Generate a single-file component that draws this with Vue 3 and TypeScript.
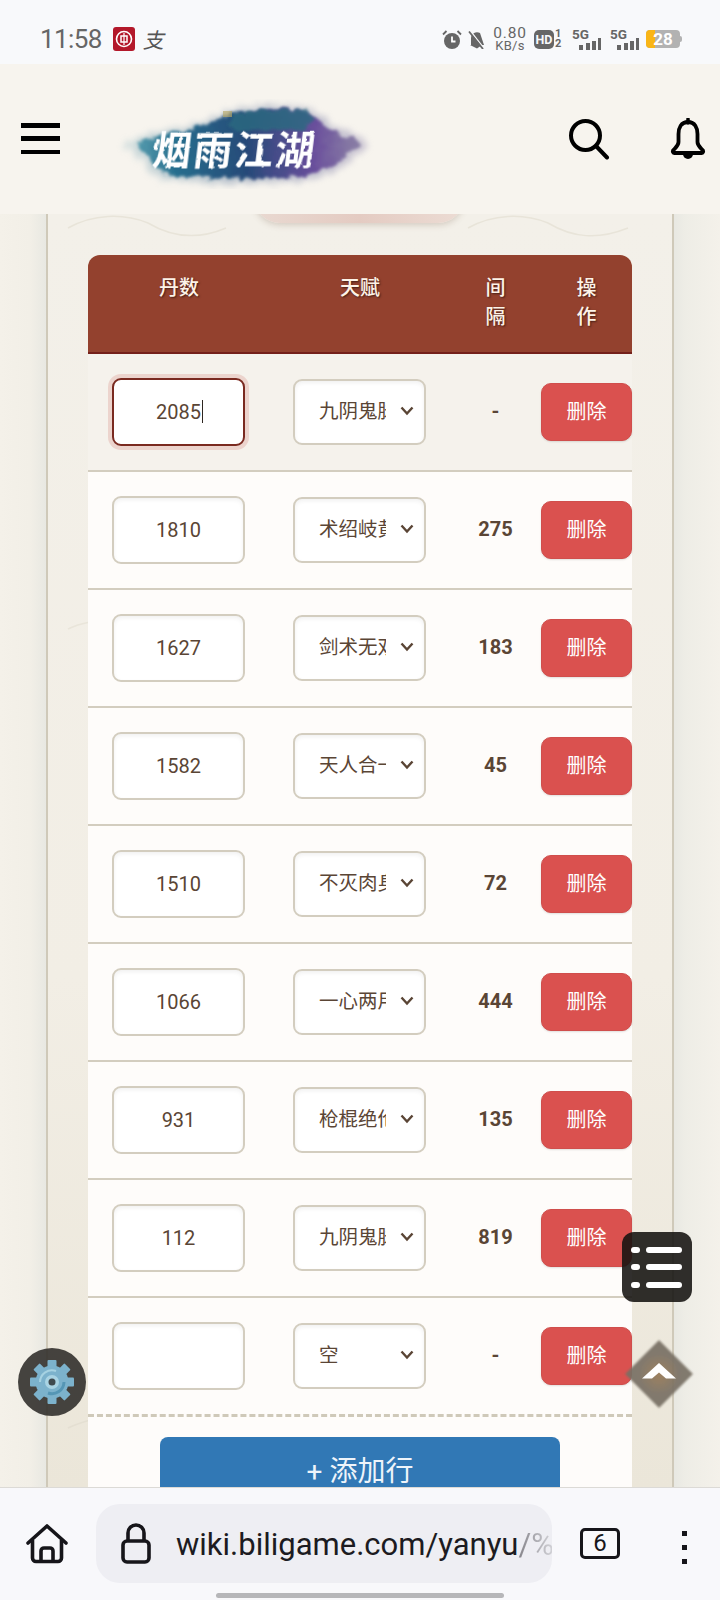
<script setup lang="ts">
interface Row { dan: string; talent: string; gap: string; focused?: boolean }

const rows: Row[] = [
  { dan: '2085', talent: '九阴鬼脉', gap: '-', focused: true },
  { dan: '1810', talent: '术绍岐黄', gap: '275' },
  { dan: '1627', talent: '剑术无双', gap: '183' },
  { dan: '1582', talent: '天人合一', gap: '45' },
  { dan: '1510', talent: '不灭肉身', gap: '72' },
  { dan: '1066', talent: '一心两用', gap: '444' },
  { dan: '931', talent: '枪棍绝伦', gap: '135' },
  { dan: '112', talent: '九阴鬼脉', gap: '819' },
  { dan: '', talent: '空', gap: '-' },
]

const talents = ['空', '九阴鬼脉', '术绍岐黄', '剑术无双', '天人合一', '不灭肉身', '一心两用', '枪棍绝伦']
const teeth = [0, 45, 90, 135, 180, 225, 270, 315]
</script>

<template>
  <div class="screen">
    <div class="status">
      <div class="status-left">
        <span class="time">11:58</span>
        <svg class="bank" width="22" height="24" viewBox="0 0 22 24">
          <rect width="22" height="24" rx="3" fill="#b3182a" />
          <circle cx="11" cy="12" r="7.500" fill="none" stroke="#fff" stroke-width="1.600" />
          <rect x="8" y="9" width="6" height="6" fill="none" stroke="#fff" stroke-width="1.500" />
          <path d="M11 6v12" stroke="#fff" stroke-width="1.200" />
        </svg>
        <span class="alipay">支</span>
      </div>
      <div class="status-right">
        <svg width="20" height="19" viewBox="0 0 20 19">
          <circle cx="10" cy="11" r="8" fill="#666" />
          <path d="M10 6.500V11.500H13.500" fill="none" stroke="#fff" stroke-width="1.800" />
          <path d="M1 4.500 4.500 1M19 4.500 15.500 1" stroke="#666" stroke-width="1.800" />
        </svg>
        <svg class="mute" width="18" height="19" viewBox="0 0 18 19">
          <path d="M3 15V8a6 6 0 0 1 9-5l4 12z M2 15h12l-5 3.500z" fill="#666" />
          <path d="M2 0.500 16 18.500" stroke="#f8f9fb" stroke-width="1.500" />
          <path d="M1 1.500 15 19" stroke="#666" stroke-width="1.800" />
        </svg>
        <div class="speed"><span class="speed-top">0.80</span><span class="speed-bottom">KB/s</span></div>
        <span class="hd">HD</span>
        <div class="sims"><span>1</span><span>2</span></div>
        <div class="net">
          <span class="net-label">5G</span>
          <svg width="24" height="12" viewBox="0 0 24 12"><path d="M2 7h4v5H2zM9 5h4v7H9zM15 3h4v9h-4zM21 0h3v12h-3z" fill="#666" /></svg>
        </div>
        <div class="net">
          <span class="net-label">5G</span>
          <svg width="24" height="12" viewBox="0 0 24 12"><path d="M2 7h4v5H2zM9 5h4v7H9zM15 3h4v9h-4zM21 0h3v12h-3z" fill="#666" /></svg>
        </div>
        <div class="battery"><span class="battery-level"></span><span class="battery-num">28</span></div>
      </div>
    </div>

    <header class="site-header">
      <div class="burger"><span></span><span></span><span></span></div>
      <svg class="logo" width="270" height="90" viewBox="0 0 270 90">
        <defs>
          <linearGradient id="ink" x1="0" x2="1" y1="0" y2="0">
            <stop offset="0" stop-color="#5a9fb0" />
            <stop offset="0.2" stop-color="#256d8d" />
            <stop offset="0.5" stop-color="#264a78" />
            <stop offset="0.8" stop-color="#6a4f9c" />
            <stop offset="1" stop-color="#8d84a6" />
          </linearGradient>
          <linearGradient id="halo" x1="0" x2="1" y1="0" y2="0">
            <stop offset="0" stop-color="#a9c6cc" />
            <stop offset="0.5" stop-color="#8d9cb4" />
            <stop offset="1" stop-color="#a79fbc" />
          </linearGradient>
          <filter id="rough" x="-10%" y="-20%" width="120%" height="140%">
            <feTurbulence type="fractalNoise" baseFrequency="0.1" numOctaves="4" seed="11" />
            <feDisplacementMap in="SourceGraphic" scale="13" xChannelSelector="R" yChannelSelector="G" />
            <feGaussianBlur stdDeviation="1.600" />
          </filter>
          <filter id="soft" x="-15%" y="-30%" width="130%" height="160%">
            <feTurbulence type="fractalNoise" baseFrequency="0.16" numOctaves="3" seed="4" />
            <feDisplacementMap in="SourceGraphic" scale="14" xChannelSelector="R" yChannelSelector="G" />
            <feGaussianBlur stdDeviation="3" />
          </filter>
          <filter id="brush" x="-5%" y="-10%" width="110%" height="120%">
            <feTurbulence type="fractalNoise" baseFrequency="0.14" numOctaves="2" seed="3" />
            <feDisplacementMap in="SourceGraphic" scale="2.500" xChannelSelector="R" yChannelSelector="G" />
          </filter>
        </defs>
        <path
          d="M14 45C36 34 66 30 88 24C110 14 130 7 160 6C192 5 210 12 222 26C238 32 254 38 258 46C250 58 234 62 228 72C200 80 190 84 160 84C120 84 70 86 46 78C36 66 26 56 14 45Z"
          fill="url(#halo)"
          opacity="0.55"
          filter="url(#soft)"
        />
        <path
          d="M22 45C44 37 70 33 92 27C112 18 130 11 160 10C188 9 204 14 216 29C230 34 246 39 250 46C242 54 230 58 222 68C200 76 188 80 160 79C122 80 74 80 52 74C44 62 34 53 22 45Z"
          fill="url(#ink)"
          filter="url(#rough)"
        />
        <path d="M118 24l6-9h12v-4h58l10 9-8 12h-70z" fill="#2b6a80" opacity="0.8" filter="url(#rough)" />
        <rect x="113" y="12" width="9" height="6" fill="#b9a968" opacity="0.65" />
        <g transform="translate(41 0) skewX(-7) translate(8 0)">
          <text class="logo-text" x="0" y="66" textLength="162" filter="url(#brush)">烟雨江湖</text>
        </g>
      </svg>
      <div class="header-spacer"></div>
      <svg class="search" width="42" height="42" viewBox="0 0 42 42">
        <circle cx="17.500" cy="17.500" r="14.500" fill="none" stroke="#000" stroke-width="4" />
        <path d="M28 28 39 39.500" stroke="#000" stroke-width="4" stroke-linecap="round" />
      </svg>
      <svg class="bell" width="36" height="42" viewBox="0 0 36 42">
        <path d="M18 4C11 4 8.500 10 8.500 16V24C8.500 28 5 30 3 32.500C2.500 33.500 3 35 4.500 35H31.500C33 35 33.500 33.500 33 32.500C31 30 27.500 28 27.500 24V16C27.500 10 25 4 18 4Z" fill="none" stroke="#000" stroke-width="3.800" stroke-linejoin="round" />
        <path d="M18 1v4" stroke="#000" stroke-width="3.500" stroke-linecap="round" />
        <path d="M13 36h10a5 5 0 0 1-10 0Z" fill="#000" />
      </svg>
    </header>

    <main class="content">
      <section class="panel">
        <svg class="waves" width="624" height="1273" viewBox="0 0 624 1273">
          <path d="M20 14C45 0 75-1 100 9C125 24 150 26 178 14" fill="none" stroke="#e8e4d9" stroke-width="1.500" />
          <path d="M420 14C445 0 475-1 500 9C525 24 550 26 580 14" fill="none" stroke="#e8e4d9" stroke-width="1.500" />
          <path d="M20 415C26 412 32 410 42 408" fill="none" stroke="#e9e5da" stroke-width="1.500" />
          <path d="M20 1214C26 1211 32 1209 42 1206" fill="none" stroke="#e4dfd2" stroke-width="1.500" />
        </svg>
        <div class="title-tab"></div>

        <div class="table">
          <div class="thead">
            <div class="th">丹数</div>
            <div class="th">天赋</div>
            <div class="th th-narrow">间隔</div>
            <div class="th th-narrow">操作</div>
          </div>

          <div
            v-for="(row, i) in rows"
            :key="i"
            class="tr"
            :class="{ 'tr-focused': row.focused, 'tr-last': i === rows.length - 1 }"
          >
            <div class="td">
              <div class="field">
                <input class="num-input" :class="{ focused: row.focused }" type="text" :value="row.dan" />
                <span v-if="row.focused" class="caret"></span>
              </div>
            </div>
            <div class="td">
              <div class="select-wrap">
                <select class="talent" :value="row.talent">
                  <option v-for="t in talents" :key="t" :value="t">{{ t }}</option>
                </select>
                <svg class="chevron" width="14" height="10" viewBox="0 0 14 10">
                  <path d="M1.500 1.500 7 7.500 12.500 1.500" fill="none" stroke="#5a4535" stroke-width="2.400" />
                </svg>
              </div>
            </div>
            <div class="td gap-cell">{{ row.gap }}</div>
            <div class="td"><button class="del" type="button">删除</button></div>
          </div>

          <div class="tfoot">
            <button class="add" type="button">+ 添加行</button>
          </div>
        </div>
      </section>
    </main>

    <nav class="browser-bar">
      <svg class="home" width="42" height="40" viewBox="0 0 42 40">
        <path d="M2 19 21 2 40 19" fill="none" stroke="#16151a" stroke-width="3.600" stroke-linecap="round" stroke-linejoin="round" />
        <path d="M6.500 16V34a3.500 3.500 0 0 0 3.500 3.500H32a3.500 3.500 0 0 0 3.500-3.500V16" fill="none" stroke="#16151a" stroke-width="3.600" />
        <path d="M15 37V27a3 3 0 0 1 3-3h6a3 3 0 0 1 3 3V37" fill="none" stroke="#16151a" stroke-width="3.600" />
      </svg>
      <div class="url-pill">
        <svg class="lock" width="30" height="41" viewBox="0 0 30 41">
          <rect x="2" y="18" width="26" height="21" rx="4" fill="none" stroke="#16151a" stroke-width="3.600" />
          <path d="M7 18V10a8 8 0 0 1 16 0V18" fill="none" stroke="#16151a" stroke-width="3.600" />
        </svg>
        <span class="url">wiki.biligame.com/yanyu<span class="url-fade">/%</span></span>
      </div>
      <span class="tab-count">6</span>
      <div class="dots"><span></span><span></span><span></span></div>
      <span class="indicator"></span>
    </nav>

    <button class="fab-gear" type="button" aria-label="设置">
      <svg width="48" height="48" viewBox="0 0 48 48">
        <g fill="#7cb2cc">
          <rect v-for="a in teeth" :key="a" x="19.500" y="2" width="9" height="10" rx="1" :transform="`rotate(${a} 24 24)`" />
          <circle cx="24" cy="24" r="16.500" />
        </g>
        <path d="M12 24a12 12 0 0 1 16-11" fill="none" stroke="#a6d2e2" stroke-width="2" />
        <path d="M36 24a12 12 0 0 1-16 11" fill="none" stroke="#5596b5" stroke-width="3" />
        <circle cx="24" cy="24" r="7" fill="#a9d3e3" />
        <circle cx="24" cy="24" r="3.500" fill="#3f4a4f" />
      </svg>
    </button>
    <button class="fab-menu" type="button" aria-label="目录">
      <span class="menu-line"><i></i><b></b></span>
      <span class="menu-line"><i></i><b></b></span>
      <span class="menu-line"><i></i><b></b></span>
    </button>
    <button class="fab-top" type="button" aria-label="回到顶部">
      <span class="fab-top-shape"></span>
      <svg class="fab-top-arrow" width="34" height="16" viewBox="0 0 34 16">
        <path d="M17 0 34 15.500H24L17 9.500 10 15.500H0Z" fill="#fff" />
      </svg>
    </button>
  </div>
</template>

<style>
html, body { margin: 0; padding: 0; background: #f3f0e8; }
</style>

<style scoped>
.screen {
  position: relative;
  width: 720px;
  height: 1600px;
  overflow: hidden;
  display: flex;
  flex-direction: column;
  font-family: Roboto, "Noto Sans CJK SC", sans-serif;
  color: #5a4535;
}

/* status bar */
.status {
  height: 64px;
  flex: none;
  background: #f8f9fb;
  display: flex;
  justify-content: space-between;
  align-items: center;
  padding: 14px 40px 0;
  box-sizing: border-box;
}
.status-left, .status-right { display: flex; align-items: center; }
.time { font-size: 26px; font-weight: 400; color: #666; letter-spacing: -0.600px; }
.bank { margin-left: 11px; }
.alipay { margin-left: 8px; font-size: 21px; color: #555; font-style: italic; }
.status-right svg { flex: none; }
.mute { margin-left: 6px; }
.speed { margin-left: 7px; width: 34px; display: flex; flex-direction: column; align-items: center; color: #666; }
.speed-top { font-size: 15.500px; line-height: 14px; font-weight: 400; letter-spacing: 0.800px; }
.speed-bottom { font-size: 13px; line-height: 12px; font-weight: 400; letter-spacing: 0.300px; }
.hd { margin-left: 7px; width: 20px; height: 19px; background: #666; color: #f8f9fb; border-radius: 5px; font-size: 12.500px; font-weight: 700; line-height: 19px; text-align: center; }
.sims { margin-left: 1px; display: flex; flex-direction: column; font-size: 11px; font-weight: 700; color: #666; line-height: 10px; width: 9px; }
.net { margin-left: 8px; width: 29px; height: 22px; position: relative; }
.net + .net { margin-left: 9px; }
.net-label { position: absolute; left: 0; top: 0; font-size: 13.500px; font-weight: 700; line-height: 12px; color: #666; }
.net svg { position: absolute; right: 0; bottom: 0; }
.battery { margin-left: 7px; width: 34px; height: 18px; background: #b2b2b2; border-radius: 4px; position: relative; display: flex; align-items: center; justify-content: center; overflow: visible; }
.battery::after { content: ""; position: absolute; right: -2px; top: 6px; width: 2px; height: 6px; background: #b2b2b2; border-radius: 0 2px 2px 0; }
.battery-level { position: absolute; left: 0; top: 0; bottom: 0; width: 9px; background: #f9b516; border-radius: 4px 0 0 4px; }
.battery-num { position: relative; font-size: 17px; font-weight: 700; color: #fff; }

/* site header */
.site-header {
  height: 150px;
  flex: none;
  background: #f7f4ee;
  display: flex;
  align-items: center;
  padding: 0 14px 0 21px;
  box-sizing: border-box;
  position: relative;
  z-index: 2;
}
.burger { width: 39px; height: 31px; display: flex; flex-direction: column; justify-content: space-between; margin-top: -1px; }
.burger span { display: block; height: 4.500px; background: #000; }
.logo { margin-left: 50px; margin-top: 10px; }
.header-spacer { flex: 1; }
.search { margin-top: -1px; }
.bell { margin-left: 60px; margin-top: -1px; }
.logo-text {
  font-family: "Noto Sans CJK SC", sans-serif;
  font-size: 39px;
  font-weight: 700;
  fill: #fff;
}

/* content */
.content {
  flex: 1;
  min-height: 0;
  overflow: hidden;
  padding: 0 46px;
  background: linear-gradient(90deg, #f4f1e9 0, #f2efe7 30px, #e8e8e2 46px, #e8e8e2 674px, #eeede6 685px, #f4f1ea 720px);
}
.panel {
  position: relative;
  height: 100%;
  box-sizing: border-box;
  padding: 41px 40px 0;
  border-left: 2px solid #cfc9b9;
  border-right: 2px solid #cfc9b9;
  background: linear-gradient(180deg, #f3f0e9 0, #f2eee5 60%, #ebe6d9 100%);
}
.waves { position: absolute; left: 0; top: 0; }
.title-tab {
  position: absolute;
  left: 206px;
  top: -30px;
  width: 210px;
  height: 39px;
  border-radius: 0 0 26px 26px;
  background: linear-gradient(90deg, #e9d9d1 0, #e4cbc2 50%, #ecdcd4 100%);
  box-shadow: 0 2px 6px rgba(120, 90, 70, 0.25);
}

/* table */
.table { position: relative; }
.thead, .tr {
  display: grid;
  grid-template-columns: 182px 180px 91px 91px;
}
.thead {
  height: 99px;
  box-sizing: border-box;
  background: #93412e;
  border-radius: 12px 12px 0 0;
  border-bottom: 2px solid #74201a;
}
.th {
  padding-top: 19px;
  text-align: center;
  font-size: 20px;
  line-height: 29px;
  font-weight: 500;
  color: #fdf3e8;
  text-shadow: 1px 1px 2px rgba(0, 0, 0, 0.55);
}
.th-narrow { padding-left: 30px; padding-right: 30px; }
.tr {
  height: 118px;
  box-sizing: border-box;
  background: #fefcfa;
  border-bottom: 2px solid #d3cdbf;
}
.tr-focused { background: #f5f2ec; }
.tr-last { height: 119px; border-bottom: 3px dashed #cfc9b9; }
.td { display: flex; align-items: center; justify-content: center; }
.field { position: relative; width: 133px; height: 68px; margin: -1px 0 0 -1px; }
.num-input {
  width: 100%;
  height: 100%;
  box-sizing: border-box;
  border: 2px solid #d3cdbf;
  border-radius: 9px;
  background: #fff;
  box-shadow: inset 0 2px 4px rgba(0, 0, 0, 0.06);
  text-align: center;
  font: 400 20px Roboto, "Noto Sans CJK SC", sans-serif;
  color: #5a4535;
  outline: none;
  padding: 0;
}
.num-input.focused {
  border-color: #7a2a20;
  box-shadow: 0 0 0 4px #ecd4cd;
}
.caret { position: absolute; left: 89.500px; top: 22px; width: 1.500px; height: 23px; background: #2e2620; }
.select-wrap { position: relative; width: 133px; height: 66px; margin: -1px 0 0 -1px; }
.talent {
  appearance: none;
  -webkit-appearance: none;
  width: 100%;
  height: 100%;
  box-sizing: border-box;
  border: 2px solid #d3cdbf;
  border-radius: 9px;
  background: #fff;
  box-shadow: inset 0 2px 4px rgba(0, 0, 0, 0.06);
  padding: 0 38px 0 24px;
  font: 400 19.500px Roboto, "Noto Sans CJK SC", sans-serif;
  color: #5a4535;
  outline: none;
}
.chevron { position: absolute; left: 107px; top: 27px; pointer-events: none; }
.gap-cell { font-size: 20px; font-weight: 700; margin-top: -2px; }
.del {
  width: 91px;
  height: 58px;
  margin-top: -1px;
  border: 1px solid #d04e4c;
  border-radius: 10px;
  background: #da514f;
  color: #fff;
  font: 400 20px Roboto, "Noto Sans CJK SC", sans-serif;
  padding: 0 0 2px;
  box-shadow: 0 1px 2px rgba(0, 0, 0, 0.12);
}
.tfoot { background: #fefcfa; padding: 20px 72px 0; height: 100px; box-sizing: border-box; }
.add {
  display: block;
  width: 400px;
  height: 64px;
  border: 0;
  border-radius: 8px;
  background: #3178b5;
  color: #eef4fa;
  font: 400 28px Roboto, "Noto Sans CJK SC", sans-serif;
  padding: 0;
}

/* browser bar */
.browser-bar {
  height: 113px;
  flex: none;
  box-sizing: border-box;
  position: relative;
  z-index: 2;
  background: #f8f8fb;
  border-top: 1px solid #dcdad6;
  display: flex;
  align-items: flex-start;
  padding: 16px 0 0 26px;
}
.home { margin-top: 20px; flex: none; }
.url-pill {
  margin-left: 28px;
  width: 456px;
  height: 79px;
  flex: none;
  box-sizing: border-box;
  border-radius: 24px;
  background: #eeeef3;
  display: flex;
  align-items: center;
  padding-left: 25px;
  overflow: hidden;
  white-space: nowrap;
}
.lock { flex: none; }
.url { margin-left: 25px; font: 400 31px Roboto, sans-serif; color: #1c1b21; margin-top: 2px; }
.url-fade { background: linear-gradient(90deg, #85848a, #d5d5da); -webkit-background-clip: text; background-clip: text; color: transparent; }
.tab-count {
  margin-left: 28px;
  margin-top: 24px;
  width: 40px;
  height: 31px;
  flex: none;
  box-sizing: border-box;
  border: 3px solid #16151a;
  border-radius: 5px;
  font-size: 24px;
  line-height: 25px;
  text-align: center;
  color: #16151a;
}
.dots { margin-left: 62px; margin-top: 27px; width: 5px; display: flex; flex-direction: column; gap: 9px; flex: none; }
.dots span { display: block; width: 5px; height: 5px; background: #16151a; }
.indicator { position: absolute; left: 216px; bottom: 2px; width: 288px; height: 5px; border-radius: 3px; background: #b6b6b9; }

/* floating buttons */
.fab-gear {
  position: absolute;
  left: 18px;
  top: 1348px;
  width: 68px;
  height: 68px;
  border: 0;
  padding: 0;
  border-radius: 50%;
  background: rgba(50, 48, 44, 0.9);
  display: flex;
  align-items: center;
  justify-content: center;
  z-index: 3;
}
.fab-menu {
  position: absolute;
  left: 622px;
  top: 1232px;
  width: 70px;
  height: 70px;
  border: 0;
  border-radius: 12px;
  background: rgba(20, 18, 16, 0.88);
  display: flex;
  flex-direction: column;
  justify-content: center;
  gap: 11.500px;
  padding: 0 10px 0 9px;
  box-sizing: border-box;
  z-index: 3;
}
.menu-line { display: flex; gap: 6px; align-items: center; height: 6px; }
.menu-line i { display: block; width: 9px; height: 6px; border-radius: 3px; background: #fff; }
.menu-line b { display: block; flex: 1; height: 6px; border-radius: 3px; background: #fff; }
.fab-top {
  position: absolute;
  left: 626px;
  top: 1341px;
  width: 66px;
  height: 66px;
  border: 0;
  padding: 0;
  background: none;
  z-index: 3;
}
.fab-top-shape {
  position: absolute;
  left: 9px;
  top: 9px;
  width: 48px;
  height: 48px;
  transform: rotate(45deg);
  background: radial-gradient(circle at 50% 50%, rgba(150, 118, 82, 0.9) 0, rgba(120, 112, 100, 0.92) 60%);
  filter: blur(0.800px);
}
.fab-top-arrow { position: absolute; left: 16px; top: 22px; }
</style>
